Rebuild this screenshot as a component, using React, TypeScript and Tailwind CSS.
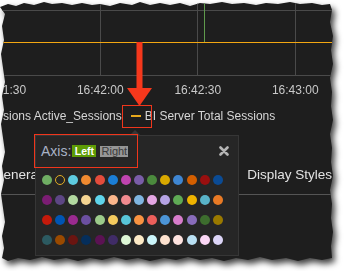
import React from "react";

const dotRows: string[][] = [
    ["bg-[#6fae63]", "ring", "bg-[#5ecbe0]", "bg-[#f08a30]", "bg-[#e44c3c]", "bg-[#1b7ed6]", "bg-[#c044b0]", "bg-[#7a5da8]", "bg-[#4b8a3d]", "bg-[#d9a900]", "bg-[#3f86d2]", "bg-[#d35f00]", "bg-[#990f0f]", "bg-[#0b4b94]"],
    ["bg-[#7b1d73]", "bg-[#5d4684]", "bg-[#b3d9a0]", "bg-[#f5d592]", "bg-[#5fd4eb]", "bg-[#fbb68b]", "bg-[#f28b90]", "bg-[#7fb5e0]", "bg-[#e4a6e3]", "bg-[#b5a3e4]", "bg-[#5faa55]", "bg-[#efb300]", "bg-[#59b3c8]", "bg-[#e87a25]"],
    ["bg-[#c41a0b]", "bg-[#0055b3]", "bg-[#9a2a8f]", "bg-[#6b4fa0]", "bg-[#9ccb8a]", "bg-[#f4ca5e]", "bg-[#58c5d8]", "bg-[#f99341]", "bg-[#ec5f5b]", "bg-[#4c95d7]", "bg-[#d77ccb]", "bg-[#896cbb]", "bg-[#3d6d2e]", "bg-[#9a7900]"],
    ["bg-[#2c5a61]", "bg-[#9a4a00]", "bg-[#6a1511]", "bg-[#052e5b]", "bg-[#5b1253]", "bg-[#402c67]", "bg-[#def7d6]", "bg-[#fdeac6]", "bg-[#ccf6fb]", "bg-[#fde2cf]", "bg-[#fee3df]", "bg-[#b9e0f3]", "bg-[#fbd7f5]", "bg-[#dcd5f7]"],
]

const timeLabels = ["16:41:30", "16:42:00", "16:42:30", "16:43:00"]

function Chart() {
    return (
        <svg width="334" height="76" className="block">
            {/* grid */}
            <line x1="0" y1="10.5" x2="334" y2="10.5" stroke="#4a4a4a" />
            <line x1="0" y1="75.5" x2="334" y2="75.5" stroke="#4a4a4a" />
            <line x1="100.5" y1="0" x2="100.5" y2="76" stroke="#4a4a4a" />
            <line x1="197.5" y1="0" x2="197.5" y2="76" stroke="#4a4a4a" />
            <line x1="295.5" y1="0" x2="295.5" y2="76" stroke="#4a4a4a" />
            {/* series */}
            <line x1="204.5" y1="0" x2="204.5" y2="42" stroke="#5f9a4c" />
            <line x1="0" y1="42.5" x2="332" y2="42.5" stroke="#f3a712" />
        </svg>
    )
}

function ColorPopover() {
    return (
        <div className="absolute left-[35px] top-[135px] w-[204px] h-[121px] bg-[#262626] border border-[#363636]">
            {/* caret */}
            <div className="absolute left-[93px] -top-[6px] w-0 h-0 border-x-[6px] border-x-transparent border-b-[6px] border-b-[#363636]" />

            {/* Axis picker */}
            <div className="flex items-center h-[30px] pl-[5px] pr-[9px]">
                <span className="text-[14px] leading-[16px] text-[#a9b3c6]">Axis:</span>
                <span className="ml-px w-[24px] h-[12px] flex items-center justify-center bg-[#5e9c05] text-white text-[10.5px] font-bold leading-none">Left</span>
                <span className="ml-[4px] w-[28px] h-[11px] flex items-center justify-center bg-[#969696] text-[#3a3a3a] text-[11px] leading-none">Right</span>
                <svg width="10" height="10" className="ml-auto" viewBox="0 0 10 10">
                    <path d="M1.5 1.5 L8.5 8.5 M8.5 1.5 L1.5 8.5" stroke="#b5b5b5" strokeWidth="2.6" strokeLinecap="round" />
                </svg>
            </div>
            <div className="absolute -left-[2px] -top-[2px] w-[104px] h-[34px] border-[1.5px] border-[#f0361c]" />

            {/* swatches */}
            <div className="grid grid-cols-[repeat(14,10px)] gap-x-[3.15px] gap-y-[10px] pl-[6px] pt-[9px]">
                {dotRows.flat().map((c, i) =>
                    c === "ring" ? (
                        <div key={i} className="w-[10px] h-[10px] rounded-full border-[1.5px] border-[#e3ad22]" />
                    ) : (
                        <div key={i} className={`w-[10px] h-[10px] rounded-full ${c}`} />
                    )
                )}
            </div>
        </div>
    )
}

export default function App() {
    return (
        <div className="w-[344px] h-[271px] bg-white overflow-hidden [font-family:'Liberation_Sans',Arial,sans-serif]">
            <div className="w-[334px] h-[262px] [filter:drop-shadow(3px_4px_3px_rgba(0,0,0,0.75))]">
                <div className="relative w-[334px] h-[262px] bg-[#1e1e1e] overflow-hidden [clip-path:polygon(0px_7px,8px_4px,16px_6px,24px_3px,34px_5px,44px_2px,52px_4px,62px_3px,72px_5px,82px_3px,92px_5px,100px_4px,110px_6px,120px_3px,132px_5px,140px_2px,150px_5px,160px_3px,170px_5px,180px_3px,190px_6px,200px_3px,210px_4px,222px_2px,232px_4px,244px_3px,256px_5px,266px_3px,278px_4px,290px_2px,300px_4px,312px_3px,322px_5px,330px_4px,332px_10px,330px_22px,333px_36px,331px_50px,333px_64px,330px_78px,332px_92px,331px_106px,333px_120px,330px_134px,332px_148px,331px_162px,333px_176px,330px_190px,332px_204px,331px_218px,333px_232px,331px_246px,332px_258px,322px_260px,310px_258px,298px_261px,286px_258px,272px_260px,260px_257px,248px_260px,236px_258px,224px_261px,212px_258px,200px_260px,188px_257px,176px_260px,164px_258px,150px_261px,138px_258px,126px_260px,114px_257px,102px_260px,90px_258px,78px_261px,66px_258px,54px_260px,42px_257px,30px_260px,18px_258px,8px_261px,2px_258px,4px_248px,2px_236px,5px_222px,3px_208px,1px_194px,4px_180px,2px_166px,5px_152px,3px_138px,1px_124px,4px_110px,2px_96px,5px_82px,3px_68px,1px_54px,4px_40px,2px_26px,5px_14px)]">
                    <Chart />

                    {/* time axis */}
                    <div className="flex h-[28px] items-center -ml-[46px] text-[12px] text-[#c9c9c9]">
                        {timeLabels.map((t) => (
                            <div key={t} className="w-[97.5px] shrink-0 text-center">{t}</div>
                        ))}
                    </div>

                    {/* legend */}
                    <div className="flex h-[24px] items-center pl-[3px] text-[12px] text-[#d6d6d6] whitespace-nowrap">
                        <span>sions Active_Sessions</span>
                        <span className="ml-[9px] w-[10px] h-[2.5px] bg-[#e8a91c]" />
                        <span className="ml-[4px]">BI Server Total Sessions</span>
                    </div>

                    {/* tabs */}
                    <div className="flex pt-[39px] pb-[11px] border-b border-[#555] text-[13.5px] leading-[16px] text-[#e2e2e2] whitespace-nowrap">
                        <span className="-ml-[7px]">General</span>
                        <span className="ml-auto mr-[2px]">Display Styles</span>
                    </div>

                    {/* annotation */}
                    <svg width="40" height="70" className="absolute left-[120px] top-[40px]" viewBox="120 40 40 70">
                        <rect x="136.5" y="42" width="6" height="48" fill="#f5381c" />
                        <polygon points="127,88 152,88 139.5,106" fill="#f5381c" />
                    </svg>
                    <div className="absolute left-[122px] top-[105px] w-[30px] h-[23px] border-[1.5px] border-[#f0361c]" />

                    <ColorPopover />
                </div>
            </div>
        </div>
    );
}
